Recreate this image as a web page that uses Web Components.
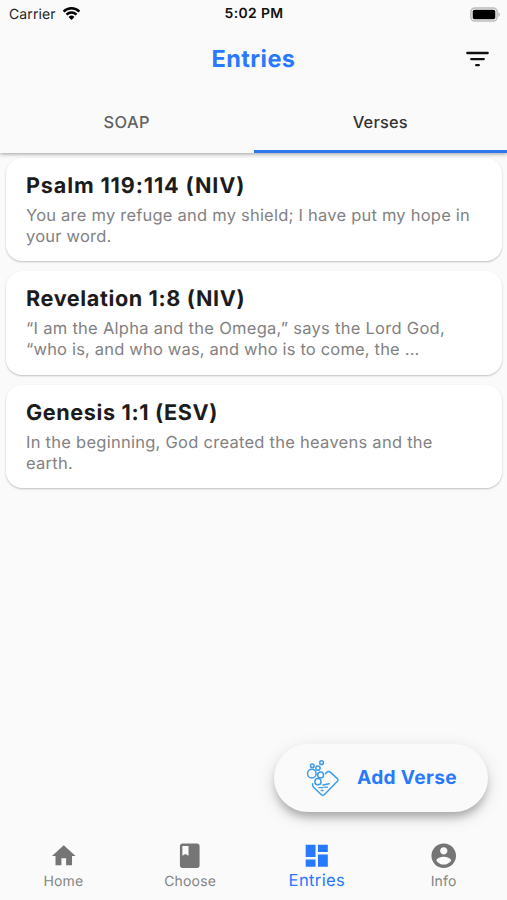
<!DOCTYPE html>
<html lang="en">
<head>
<meta charset="utf-8">
<title>Entries</title>
<style>
html,body{margin:0;height:100%;background:#fafafa}
body{font-family:Inter,"Liberation Sans",sans-serif;overflow:hidden;text-rendering:geometricPrecision}
</style>
</head>
<body>
<entries-screen></entries-screen>
<script>
function define(name, html) {
  const tpl = document.createElement('template');
  tpl.innerHTML = html;
  customElements.define(name, class extends HTMLElement {
    constructor() {
      super();
      this.attachShadow({ mode: 'open' }).appendChild(tpl.content.cloneNode(true));
    }
  });
}

define('status-bar', `<style>
:host{display:grid;grid-template-columns:1fr auto 1fr;align-items:center;height:27px;padding:0 7px 0 9px;color:#111;font-size:14px;line-height:27px}
.l{display:flex;align-items:center;gap:6px;letter-spacing:.1px;color:#222}
.l span{padding-top:1px}
.l svg{margin-top:-1px}
.c{font-weight:600;font-size:13.9px;letter-spacing:.36px;margin-left:-1px;padding-top:1px}
.r{justify-self:end;display:flex}
svg{display:block}
</style>
<div class="l"><span>Carrier</span><svg width="19" height="15" viewBox="0 0 20 16"><g fill="none" stroke="#000" stroke-width="2.7"><path d="M1.600 5.900a12 12 0 0 1 16.800 0"/><path d="M4.700 9.200a7.600 7.600 0 0 1 10.600 0"/></g><path d="M10 14.900 6.900 11.700a4.500 4.500 0 0 1 6.200 0z"/></svg></div>
<div class="c">5:02 PM</div>
<div class="r"><svg width="30" height="15" viewBox="0 0 30 15"><rect x=".9" y=".9" width="26.200" height="13.200" rx="4" fill="#fafafa" stroke="#bcbcbc" stroke-width="1.500"/><rect x="2.700" y="2.700" width="22.600" height="9.600" rx="1.800"/><path d="M28.400 5.200c1.900.7 1.900 3.900 0 4.600z" fill="#b4b4b4"/></svg></div>`);

define('app-header', `<style>
:host{display:grid;grid-template-columns:1fr auto 1fr;align-items:center;height:64px;padding:0 18px}
h1{grid-column:2;margin:0;font-size:23.5px;font-weight:700;color:#2979ff;letter-spacing:.46px;line-height:30px}
svg{justify-self:end;display:block}
</style><h1><slot></slot></h1>
<svg width="23" height="16" viewBox="0 0 23 16"><path d="M1.300 2h20.400M5.200 8.100h12.600M10.200 14.200h2.600" stroke="#111" stroke-width="2.300" stroke-linecap="round"/></svg>`);

define('tab-bar', `<style>
:host{display:flex;height:61.5px;margin-bottom:.5px;position:relative;z-index:1;background:#fafafa;box-shadow:0 1px 4px rgba(0,0,0,.38);clip-path:inset(0 0 -10px 0)}
</style><slot></slot>`);

define('tab-item', `<style>
:host{flex:1;display:flex;justify-content:center;box-sizing:border-box;height:61.5px;padding-top:20px;font-size:16.4px;line-height:22px;font-weight:500;color:#616161;letter-spacing:.4px}
:host([active]){color:#333;border-bottom:3px solid #2f78ec;letter-spacing:.2px}
</style><span><slot></slot></span>`);

define('verse-card', `<style>
:host{display:block;box-sizing:border-box;height:103.5px;padding:16.2px 20px 0;border-radius:16px;background:#fff;box-shadow:0 1px 2px rgba(0,0,0,.24)}
h2{margin:0;font-size:21.6px;line-height:25px;font-weight:650;color:#1c1c1c;white-space:nowrap;letter-spacing:var(--title-spacing,.62px)}
p{margin:6.2px 0 0;font-size:16.5px;line-height:21px;color:#828282;white-space:nowrap;letter-spacing:var(--body-spacing,.26px)}
</style><h2><slot name="title"></slot></h2><p><slot></slot></p>`);

define('add-button', `<style>
:host{display:flex;align-items:center;box-sizing:border-box;width:214px;height:68px;padding-left:32px;gap:16px;border-radius:34px;background:#fafafa;box-shadow:0 7px 9px -2px rgba(0,0,0,.25),0 5px 18px rgba(0,0,0,.13);color:#2979ff;font-weight:700;font-size:19.1px;letter-spacing:.36px}
svg{display:block}
span{white-space:nowrap;padding-bottom:2px}
</style>
<svg width="35" height="40" viewBox="0 0 36 40" fill="none" stroke="#3c9be8" stroke-width="1.500" stroke-linecap="round" stroke-linejoin="round"><path d="M20 15.500 22 13.700q1.500-1.100 2.900.3l7.400 6.600q1.400 1.400 0 2.800L19 37q-1.700 1.500-3.400 0L8 29.700q-1.700-1.600-1.200-3.700"/><circle cx="6" cy="15.500" r="4.400"/><circle cx="15" cy="16.800" r="3"/><circle cx="12.300" cy="23.800" r="3.200"/><circle cx="12.300" cy="9.800" r="2.200"/><circle cx="6.500" cy="7.400" r="1.900"/><circle cx="16" cy="4.200" r="1.900"/><path d="M17.500 27.200 23.800 26M13.200 29.900h4.200M19 29.400h3M15.800 32.900h1.600"/></svg>
<span><slot></slot></span>`);

define('nav-bar', `<style>
:host{display:grid;grid-template-columns:repeat(4,1fr);height:68px;background:#fafafa;position:relative}
</style><slot></slot>`);

define('nav-item', `<style>
:host{display:flex;flex-direction:column;align-items:center;padding-top:9px;color:#757575;font-size:14px;line-height:18px;letter-spacing:.18px}
:host([active]){color:#2979ff;font-size:16.6px;letter-spacing:.35px}
.i{height:32px}
span{color:#858585}
:host([active]) span{color:#2979ff;margin-top:-1px}
</style><div class="i"><slot name="icon"></slot></div><span><slot></slot></span>`);

define('entries-screen', `<style>
:host{display:flex;flex-direction:column;height:900px;width:507px;background:#fafafa}
main{flex:1;padding:4.5px 5px 0 6px;display:flex;flex-direction:column;gap:10px;position:relative}
add-button{position:absolute;right:19px;bottom:20px}
svg{display:block;width:29.5px;height:29.5px;fill:currentColor}
.psalm{--title-spacing:.86px;--body-spacing:.22px}
.revelation{--title-spacing:.62px;--body-spacing:.28px}
.tight{letter-spacing:.18px}
</style>
<status-bar></status-bar>
<app-header>Entries</app-header>
<tab-bar><tab-item>SOAP</tab-item><tab-item active>Verses</tab-item></tab-bar>
<main>
<verse-card class="psalm"><span slot="title">Psalm 119:114 (NIV)</span>You are my refuge and my shield; I have put my hope in<br>your word.</verse-card>
<verse-card class="revelation"><span slot="title">Revelation 1:8 (NIV)</span>“I am the Alpha and the Omega,” says the Lord God,<br><span class="tight">“who is, and who was, and who is to come, the ...</span></verse-card>
<verse-card><span slot="title">Genesis 1:1 (ESV)</span>In the beginning, God created the heavens and the<br>earth.</verse-card>
<add-button>Add Verse</add-button>
</main>
<nav-bar>
<nav-item><svg slot="icon" viewBox="0 0 24 24"><path d="M10 20v-6h4v6h5v-8h3L12 3 2 12h3v8z" transform="translate(.5 .6) scale(.96)"/></svg>Home</nav-item>
<nav-item><svg slot="icon" viewBox="0 0 24 24"><path d="M18 2H6c-1.100 0-2 .9-2 2v16c0 1.100.9 2 2 2h12c1.100 0 2-.9 2-2V4c0-1.100-.9-2-2-2zM6 4h5v8l-2.500-1.500L6 12V4z"/></svg>Choose</nav-item>
<nav-item active><svg slot="icon" viewBox="0 0 24 24"><path d="M3 13h8V3H3v10zm0 8h8v-6H3v6zm10 0h8V11h-8v10zm0-18v6h8V3h-8z"/></svg>Entries</nav-item>
<nav-item><svg slot="icon" viewBox="0 0 24 24"><path d="M12 2C6.480 2 2 6.480 2 12s4.480 10 10 10 10-4.480 10-10S17.520 2 12 2zm0 3c1.660 0 3 1.340 3 3s-1.340 3-3 3-3-1.340-3-3 1.340-3 3-3zm0 14.200c-2.500 0-4.710-1.280-6-3.220.03-1.990 4-3.080 6-3.080 1.990 0 5.970 1.090 6 3.080-1.290 1.940-3.500 3.220-6 3.220z"/></svg>Info</nav-item>
</nav-bar>`);
</script>
</body>
</html>
